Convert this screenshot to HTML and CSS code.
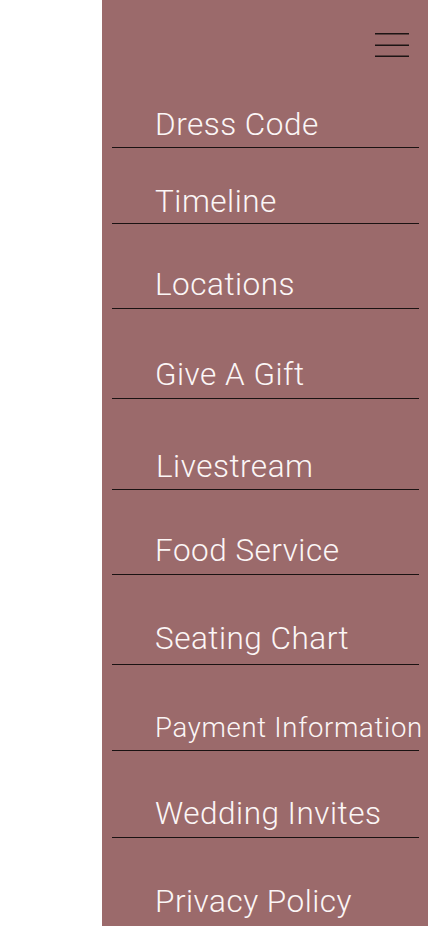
FILE: index.html
```html
<!DOCTYPE html>
<html lang="en">
<head>
<meta charset="utf-8">
<title>Menu</title>
<link rel="stylesheet" href="styles.css">
</head>
<body>
<div class="page">
  <nav class="panel">
    <div class="panel-header">
      <button class="burger" aria-label="Close menu">
        <svg width="34" height="25" viewBox="0 0 34 25"><path d="M0 0.7H34M0 12.2H34M0 23.2H34" stroke="#1c1414" stroke-width="1.4" fill="none"/></svg>
      </button>
    </div>
    <ul class="menu">
      <li class="menu-item"><a href="#">Dress Code</a></li>
      <li class="menu-item"><a href="#">Timeline</a></li>
      <li class="menu-item"><a href="#">Locations</a></li>
      <li class="menu-item"><a href="#">Give A Gift</a></li>
      <li class="menu-item"><a href="#">Livestream</a></li>
      <li class="menu-item"><a href="#">Food Service</a></li>
      <li class="menu-item"><a href="#">Seating Chart</a></li>
      <li class="menu-item menu-item--small"><a href="#">Payment Information</a></li>
      <li class="menu-item"><a href="#">Wedding Invites</a></li>
      <li class="menu-item menu-item--last"><a href="#">Privacy Policy</a></li>
    </ul>
  </nav>
</div>
</body>
</html>
```
FILE: styles.css
```css
html, body {
  margin: 0;
  padding: 0;
  background: #ffffff;
}
.page {
  display: flex;
  justify-content: flex-end;
  height: 926px;
  overflow: hidden;
}
.panel {
  width: 326px;
  background: #9b6a6b;
  display: flex;
  flex-direction: column;
  font-family: "Roboto Light", Roboto, "Noto Sans", sans-serif;
  font-weight: 300;
}
.panel-header {
  display: flex;
  justify-content: flex-end;
  padding: 33px 19px 0 0;
}
.burger {
  border: 0;
  background: none;
  padding: 0;
  margin: 0;
  width: 34px;
  height: 25px;
  display: block;
}
.burger svg { display: block; }
.menu {
  list-style: none;
  margin: 0;
  padding: 0 9px 0 10px;
}
.menu-item {
  border-bottom: 1px solid #1a1212;
  padding: 43px 0 4px 43px;
  font-size: 31.5px;
  line-height: 36px;
  letter-spacing: 0.5px;
}
.menu-item a {
  color: #fbf6f6;
  text-decoration: none;
  white-space: nowrap;
}
.menu-item:nth-child(1) { padding-top: 49px; padding-bottom: 4px; }
.menu-item:nth-child(2) { padding-top: 36px; padding-bottom: 3px; }
.menu-item:nth-child(3) { padding-top: 43px; padding-bottom: 5px; }
.menu-item:nth-child(4) { padding-top: 48px; padding-bottom: 5px; }
.menu-item:nth-child(5) { padding-top: 50px; padding-bottom: 4px; padding-left: 44px; }
.menu-item:nth-child(6) { padding-top: 43px; padding-bottom: 5px; }
.menu-item:nth-child(7) { padding-top: 46px; padding-bottom: 7px; }
.menu-item--small { font-size: 27.5px; letter-spacing: 0.7px; padding-top: 45px; padding-bottom: 4px; }
.menu-item:nth-child(9) { padding-top: 45px; padding-bottom: 5px; }
.menu-item--last { padding-top: 46px; border-bottom: 0; }
```
